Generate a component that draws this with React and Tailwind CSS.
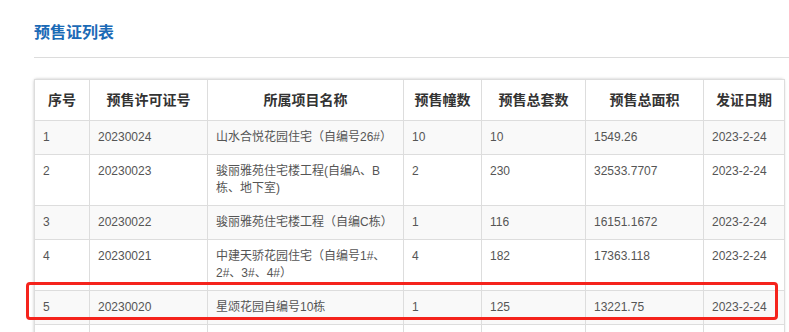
import React from "react";

const rows = [
  { no: "1", permit: "20230024", name: "山水合悦花园住宅（自编号26#）", blocks: "10", units: "10", area: "1549.26", date: "2023-2-24" },
  { no: "2", permit: "20230023", name: "骏丽雅苑住宅楼工程(自编A、B栋、地下室)", blocks: "2", units: "230", area: "32533.7707", date: "2023-2-24" },
  { no: "3", permit: "20230022", name: "骏丽雅苑住宅楼工程（自编C栋）", blocks: "1", units: "116", area: "16151.1672", date: "2023-2-24" },
  { no: "4", permit: "20230021", name: "中建天骄花园住宅（自编号1#、2#、3#、4#）", blocks: "4", units: "182", area: "17363.118", date: "2023-2-24" },
  { no: "5", permit: "20230020", name: "星颂花园自编号10栋", blocks: "1", units: "125", area: "13221.75", date: "2023-2-24" },
  { no: "", permit: "", name: "", blocks: "", units: "", area: "", date: "" },
];

const headers = ["序号", "预售许可证号", "所属项目名称", "预售幢数", "预售总套数", "预售总面积", "发证日期"];
const widths = ["w-[55px]", "w-[118px]", "w-[196px]", "w-[78px]", "w-[104px]", "w-[118px]", "w-[81px]"];

export default function App() {
  return (
    <div
      className="relative w-[789px] h-[332px] overflow-hidden bg-white"
      style={{ fontFamily: '"Liberation Sans", Arial, "Noto Sans CJK SC", sans-serif' }}
    >
      {/* 标题 */}
      <div className="pl-[34px] pt-[21px]">
        <h2 className="text-[16px] leading-[24px] font-bold text-[#1b6ab6]">预售证列表</h2>
      </div>
      <div className="ml-[34px] mt-[12px] border-t border-[#dcdcdc]" />

      {/* 表格 */}
      <div className="ml-[34px] mt-[21px] w-[750px] rounded-[3px] shadow-[0_0_3px_rgba(0,0,0,0.25)]">
        <table className="w-full table-fixed border-collapse text-[12px]">
          <colgroup>
            {widths.map((w, i) => (
              <col key={i} className={w} />
            ))}
          </colgroup>
          <thead>
            <tr className="bg-white">
              {headers.map((h) => (
                <th
                  key={h}
                  className="h-[41px] border border-[#dddddd] text-center align-middle text-[14px] font-bold text-[#333]"
                >
                  {h}
                </th>
              ))}
            </tr>
          </thead>
          <tbody>
            {rows.map((r, i) => (
              <tr key={i} className={i % 2 === 0 ? "bg-[#f9f9f9]" : "bg-white"}>
                {[r.no, r.permit, r.name, r.blocks, r.units, r.area, r.date].map((v, j) => (
                  <td
                    key={j}
                    className="border border-[#dddddd] px-[8px] py-[8px] align-top leading-[17px] text-[#555]"
                  >
                    {v || "\u00a0"}
                  </td>
                ))}
              </tr>
            ))}
          </tbody>
        </table>
      </div>

      {/* 红框标注 */}
      <div className="absolute left-[26px] top-[282px] w-[752px] h-[38px] rounded-[4px] border-[3px] border-[#f5231c]" />
    </div>
  );
}
